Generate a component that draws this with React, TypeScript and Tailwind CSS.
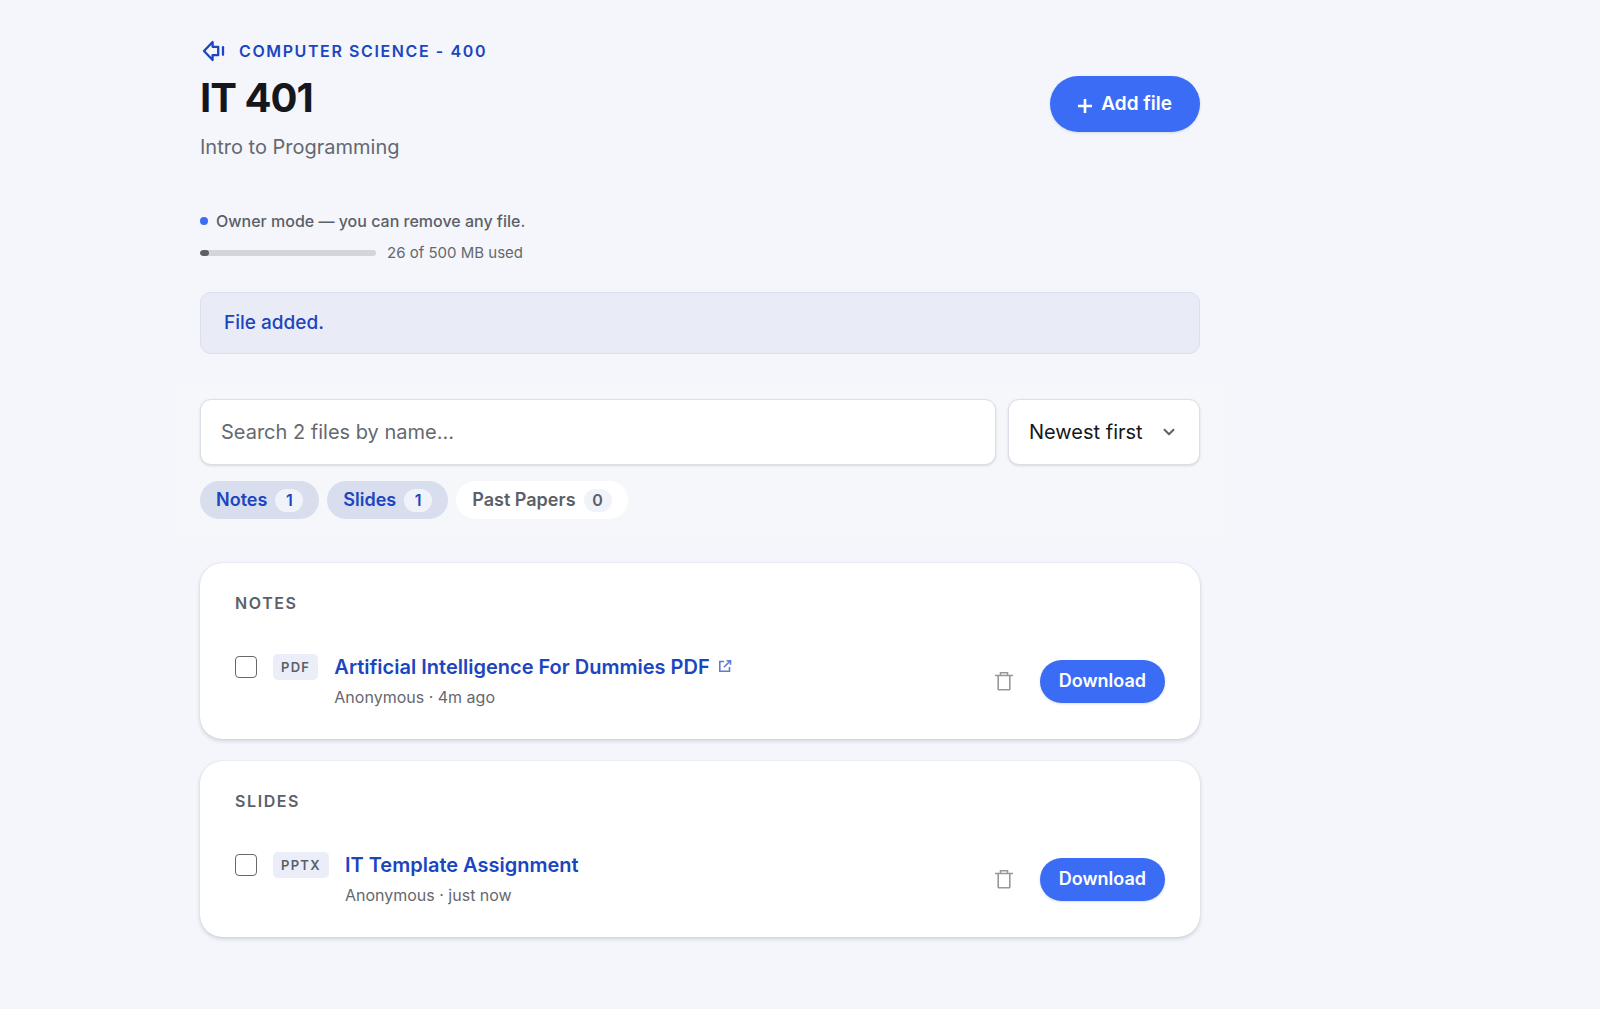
import { ChevronDown } from "lucide-react";

type FileItem = { id: string; ext: string; title: string; meta: string; external?: boolean };

const filters = [
  { label: "Notes", count: 1, active: true },
  { label: "Slides", count: 1, active: true },
  { label: "Past Papers", count: 0, active: false },
];

const groups: { name: string; files: FileItem[] }[] = [
  {
    name: "Notes",
    files: [
      {
        id: "ai-dummies",
        ext: "PDF",
        title: "Artificial Intelligence For Dummies PDF",
        meta: "Anonymous · 4m ago",
        external: true,
      },
    ],
  },
  {
    name: "Slides",
    files: [
      { id: "it-template", ext: "PPTX", title: "IT Template Assignment", meta: "Anonymous · just now" },
    ],
  },
];

const usedMb = 26;
const totalMb = 500;

function BackIcon() {
  return (
    <svg viewBox="0 0 27 26" className="h-[26px] w-[27px] shrink-0" fill="none" stroke="currentColor" strokeWidth="2.3" strokeLinejoin="round" strokeLinecap="round">
      <path d="M4 13 12.6 4v4.8h5.6v8.4h-5.6V22Z" />
      <path d="M23 9.2v7.6" />
    </svg>
  );
}

function PlusIcon() {
  return (
    <svg viewBox="0 0 14 14" className="mt-1 h-[14px] w-[14px]" fill="none" stroke="currentColor" strokeWidth="2.6">
      <path d="M7 0v14M0 7h14" />
    </svg>
  );
}

function ExternalIcon() {
  return (
    <svg viewBox="0 0 14 14" className="mb-0.5 h-[14px] w-[14px] shrink-0 opacity-70" fill="none" stroke="currentColor" strokeWidth="1.6">
      <path d="M6 2.5H1.8v9.7h9.7V8" />
      <path d="M8.5 1.8h4v4M12.5 1.8 5.8 8.3" />
    </svg>
  );
}

function TrashIcon() {
  return (
    <svg viewBox="0 0 20 20" className="h-5 w-5" fill="none" stroke="currentColor" strokeWidth="1.6">
      <path d="M1 4.5h18M6.5 4.5V1.8h7v2.7M4.2 4.5V18a.8.8 0 0 0 .8.8h10a.8.8 0 0 0 .8-.8V4.5" />
    </svg>
  );
}

function FileRow({ file }: { file: FileItem }) {
  return (
    <li className="flex items-center justify-between gap-6">
      <div className="flex items-start gap-4">
        <input
          type="checkbox"
          aria-label={file.title}
          className="mt-[3px] h-[22px] w-[22px] shrink-0 appearance-none rounded-[4px] border border-[#66686d] bg-white"
        />
        <span className="mt-px rounded-[5px] bg-[#ebeef8] px-2 text-[13px] font-semibold leading-[26px] tracking-widest text-[#5b5f68]">
          {file.ext}
        </span>
        <div>
          <a href="#" className="flex items-center gap-2 text-xl font-semibold leading-7 text-[#1c45c0] hover:underline">
            {file.title}
            {file.external && <ExternalIcon />}
          </a>
          <p className="mt-1 text-base leading-6 text-[#65686f]">{file.meta}</p>
        </div>
      </div>
      <div className="flex items-center gap-[26px]">
        <button type="button" aria-label="Delete file" className="text-[#96989c]">
          <TrashIcon />
        </button>
        <button type="button" className="h-[43px] rounded-full bg-[#3b6cf6] px-[19px] text-lg font-semibold text-white shadow-sm">
          Download
        </button>
      </div>
    </li>
  );
}

export default function App() {
  return (
    <div className="min-h-screen bg-[#f4f6fb] font-['Inter','Liberation_Sans',sans-serif] text-[#15171c]">
      <main className="ml-[12.5%] max-w-[1000px] pb-[72px] pt-[37px]">
        <header className="flex items-center justify-between">
          <div>
            <a href="#" className="flex items-center gap-3 text-base font-semibold uppercase leading-7 tracking-widest text-[#1c45c0]">
              <BackIcon />
              Computer Science - 400
            </a>
            <h1 className="mt-2 text-[40px] font-bold leading-[50px] tracking-tight">IT 401</h1>
            <p className="mt-2 text-xl leading-8 text-[#65686f]">Intro to Programming</p>
          </div>
          <button
            type="button"
            className="mt-2 flex h-14 items-center gap-[9px] rounded-full bg-[#3b6cf6] px-7 text-[19px] font-semibold text-white shadow-sm"
          >
            <PlusIcon />
            Add file
          </button>
        </header>

        <section className="mt-11">
          <p className="flex items-center gap-2 text-base font-medium leading-7 text-[#5b5f68]">
            <span className="h-2 w-2 rounded-full bg-[#3b6cf6]" />
            Owner mode — you can remove any file.
          </p>
          <div className="mt-1 flex items-center gap-[11px] text-[15px] leading-7 text-[#65686f]">
            <div className="h-[6px] w-44 overflow-hidden rounded-full bg-[#d3d5da]">
              <div className="h-full rounded-full bg-[#5b5f68]" style={{ width: `${(usedMb / totalMb) * 100}%` }} />
            </div>
            {usedMb} of {totalMb} MB used
          </div>
        </section>

        <p
          role="status"
          className="mt-[25px] rounded-[11px] border border-[#d9def0] bg-[#e9ecf7] px-[23px] py-4 text-[19px] font-medium leading-7 text-[#1c45c0]"
        >
          File added.
        </p>

        <section className="-mx-6 mt-[29px] bg-[#f5f7fb] px-6 py-4">
          <div className="flex gap-3">
            <input
              type="search"
              aria-label="Search files"
              placeholder="Search 2 files by name…"
              className="h-[66px] min-w-0 flex-1 rounded-[11px] border border-[#dcdfe8] bg-white px-5 text-xl shadow-sm outline-none placeholder:text-[#65686f]"
            />
            <div className="relative">
              <select
                aria-label="Sort order"
                className="h-[66px] w-48 appearance-none rounded-[11px] border border-[#dcdfe8] bg-white px-5 text-xl text-[#15171c] shadow-sm"
              >
                <option>Newest first</option>
                <option>Oldest first</option>
              </select>
              <ChevronDown strokeWidth={2.5} className="pointer-events-none absolute right-[22px] top-6 h-[18px] w-[18px] text-[#5b5f68]" />
            </div>
          </div>
          <div className="mt-4 flex gap-2">
            {filters.map((f) => (
              <button
                key={f.label}
                type="button"
                className={`flex h-[38px] items-center gap-2 rounded-full px-4 text-lg font-semibold ${
                  f.active ? "bg-[#d8deee] text-[#1c45c0]" : "bg-white text-[#5b5f68]"
                }`}
              >
                {f.label}
                <span className="min-w-7 rounded-full bg-[#f0f3fa] px-2 text-base leading-[23px]">{f.count}</span>
              </button>
            ))}
          </div>
        </section>

        <div className="mt-7 flex flex-col gap-[22px]">
          {groups.map((group) => (
            <section
              key={group.name}
              className="rounded-[22px] bg-white px-[35px] pb-[30px] pt-[26px] shadow-[0_0_1px_rgba(20,30,60,0.2),0_2px_4px_rgba(20,30,60,0.16)]"
            >
              <h2 className="text-base font-semibold uppercase leading-7 tracking-widest text-[#5b5f68]">{group.name}</h2>
              <ul className="mt-9">
                {group.files.map((file) => (
                  <FileRow key={file.id} file={file} />
                ))}
              </ul>
            </section>
          ))}
        </div>
      </main>
    </div>
  );
}
